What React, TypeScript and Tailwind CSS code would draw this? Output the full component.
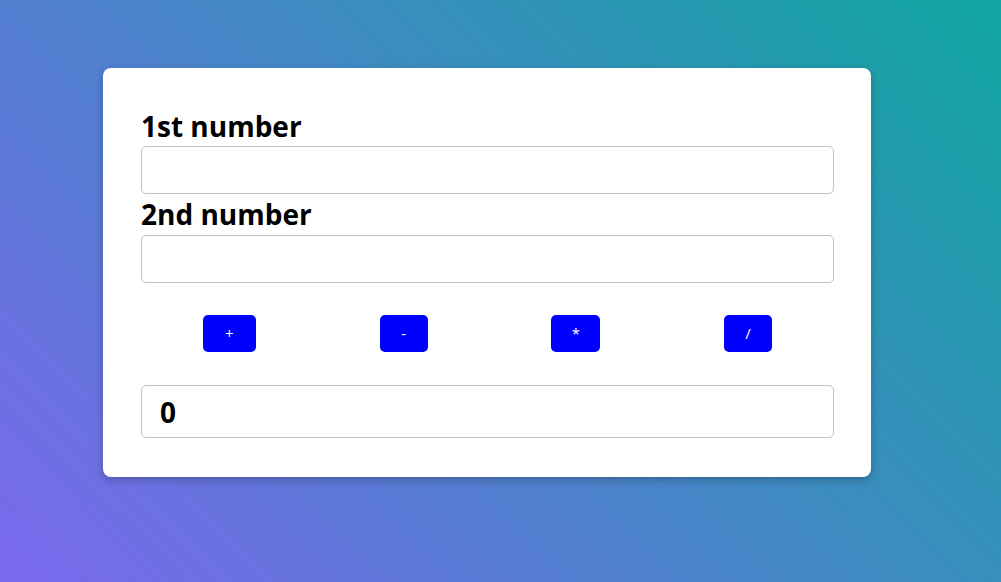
export default function App() {
  const ops = [
    { label: '+', w: 'w-[53px]' },
    { label: '-', w: 'w-[48px]' },
    { label: '*', w: 'w-[49px]' },
    { label: '/', w: 'w-[48px]' },
  ];

  return (
    <div
      className="w-[1001px] h-[582px] bg-[linear-gradient(45deg,#7b68ee,#10a6a0)] pt-[68px] pl-[103px]"
      style={{ fontFamily: '"Open Sans", "Noto Sans", sans-serif' }}
    >
      <div className="w-[768px] h-[409px] bg-white rounded-lg shadow-[0_3px_8px_rgba(0,0,0,0.25)] pl-[38px] pr-[37px] pt-[38px]">
        <label className="block text-[28px] font-bold leading-[40px] text-black">1st number</label>
        <input className="block w-full h-[48px] border border-[#c4c4c4] rounded-[5px] outline-none" />
        <label className="block text-[28px] font-bold leading-[41px] text-black">2nd number</label>
        <input className="block w-full h-[48px] border border-[#c4c4c4] rounded-[5px] outline-none" />

        <div className="flex justify-around mt-[32px]">
          {ops.map((op) => (
            <button
              key={op.label}
              className={`${op.w} h-[37px] bg-[#0000ff] text-white text-[15px] rounded-[5px]`}
            >
              {op.label}
            </button>
          ))}
        </div>

        <div className="mt-[33px] h-[53px] border border-[#c4c4c4] rounded-[5px] flex items-center pl-[18px] text-[28px] font-bold text-black">
          0
        </div>
      </div>
    </div>
  );
}
